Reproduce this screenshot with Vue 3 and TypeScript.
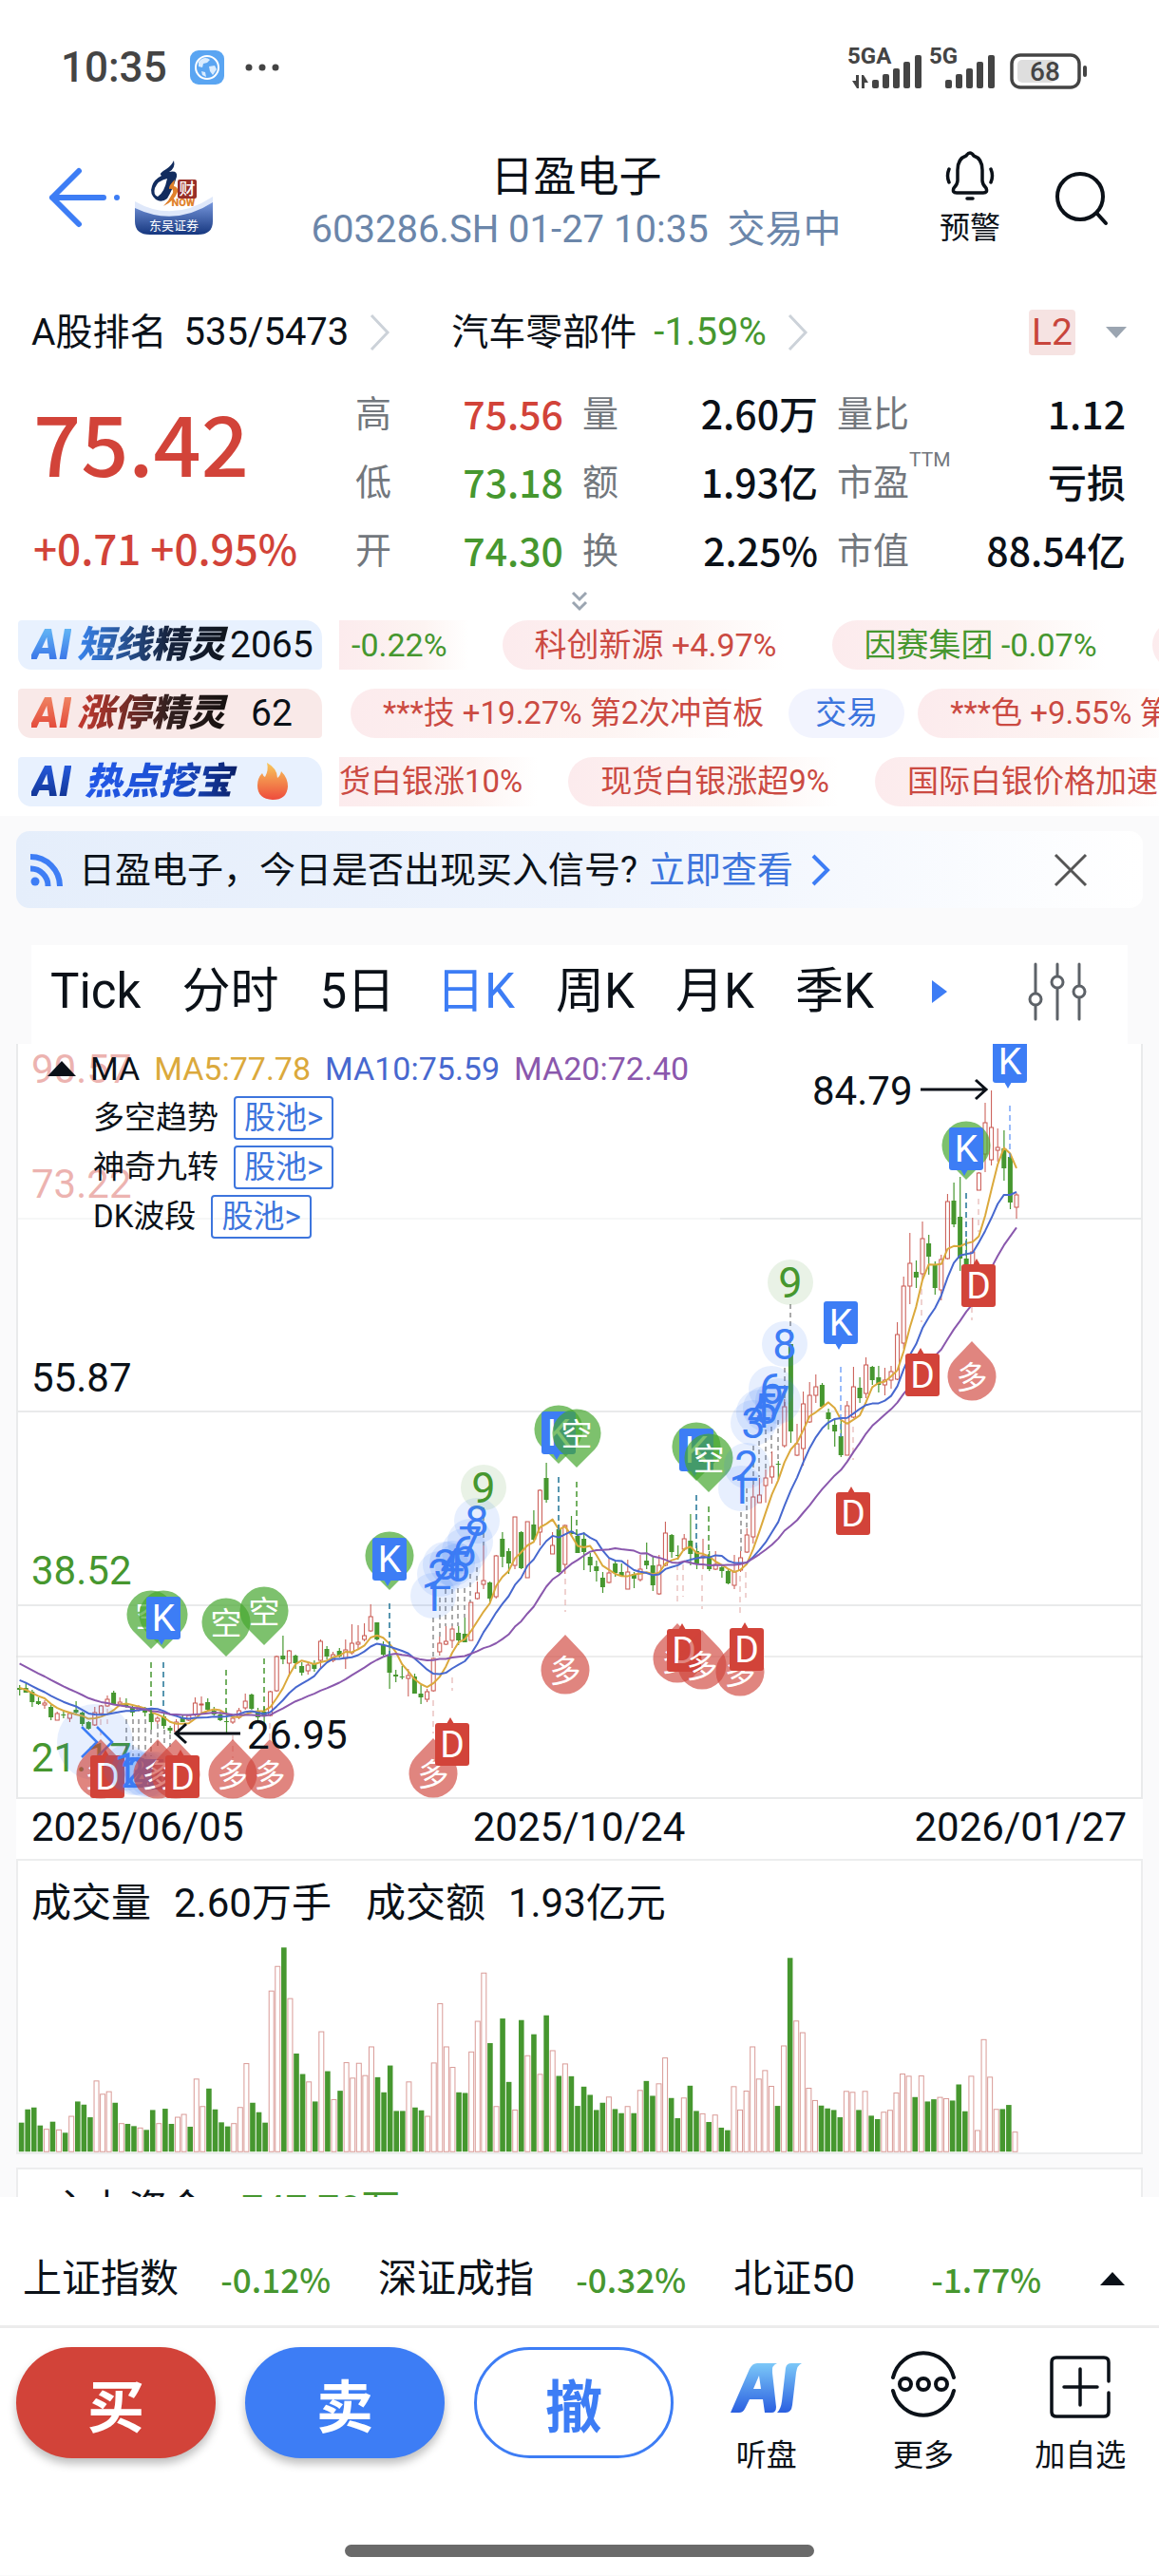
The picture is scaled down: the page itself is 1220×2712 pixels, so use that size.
<script setup lang="ts">
import { ref } from 'vue'

type Tone = 'up' | 'down' | 'flat'
interface Stat { label: string; value: string; tone: Tone; sup?: string }

const stats: Stat[][] = [
  [
    { label: '高', value: '75.56', tone: 'up' },
    { label: '低', value: '73.18', tone: 'down' },
    { label: '开', value: '74.30', tone: 'down' },
  ],
  [
    { label: '量', value: '2.60万', tone: 'flat' },
    { label: '额', value: '1.93亿', tone: 'flat' },
    { label: '换', value: '2.25%', tone: 'flat' },
  ],
  [
    { label: '量比', value: '1.12', tone: 'flat' },
    { label: '市盈', value: '亏损', tone: 'flat', sup: 'TTM' },
    { label: '市值', value: '88.54亿', tone: 'flat' },
  ],
]

const tabs = ['Tick', '分时', '5日', '日K', '周K', '月K', '季K']
const activeTab = ref('日K')

const pools = ['多空趋势', '神奇九转', 'DK波段']

const indices = [
  { name: '上证指数', change: '-0.12%' },
  { name: '深证成指', change: '-0.32%' },
  { name: '北证50', change: '-1.77%' },
]

/* Daily candles on the chart's vertical scale: [falling, high, body top, body bottom, low] */
const candles: number[][] = [
  [1,675,678,680,686],[1,672,678,683,683],[1,680,682,693,698],[1,688,692,695,696],[0,691,694,696,700],
  [1,696,698,709,712],[0,703,705,712,712],[1,701,706,707,710],[0,703,705,710,714],[1,692,701,704,705],
  [1,703,704,716,718],[1,713,714,721,722],[0,698,704,717,718],[0,696,697,705,706],[0,686,690,697,698],
  [1,681,683,695,696],[0,688,693,695,696],[1,689,694,698,699],[1,697,698,704,708],[0,696,698,701,703],
  [1,698,699,704,708],[1,703,705,714,722],[0,708,710,713,716],[1,704,708,718,721],[1,718,720,723,726],
  [0,711,714,724,724],[1,706,709,714,714],[0,706,707,712,713],[0,688,694,706,708],[0,687,695,696,706],
  [1,689,693,701,703],[1,698,702,706,707],[1,703,706,712,713],[1,703,713,714,726],[0,708,710,714,716],
  [0,699,702,709,711],[0,684,692,699,701],[1,684,685,700,701],[1,699,702,709,712],[1,698,703,708,718],
  [0,681,682,707,708],[0,644,645,681,682],[1,623,644,648,653],[0,638,639,652,666],[1,643,644,652,658],
  [1,651,655,662,665],[0,651,654,660,664],[1,649,653,658,661],[0,627,629,649,658],[1,634,637,645,648],
  [0,640,643,649,651],[1,636,639,645,646],[0,627,638,647,658],[0,611,631,641,643],[0,612,630,632,638],
  [0,610,623,627,629],[0,590,603,618,619],[1,609,609,627,628],[1,629,633,643,644],[1,634,644,662,679],
  [1,659,664,666,672],[1,655,666,667,669],[0,658,665,668,687],[1,663,666,684,684],[1,675,684,688,695],
  [0,679,682,690,693],[0,646,647,681,682],[0,624,631,640,644],[0,613,629,632,633],[0,613,616,628,636],
  [1,613,620,628,633],[1,604,621,630,630],[0,588,588,628,628],[0,566,578,584,585],[0,528,565,569,574],
  [1,566,567,584,588],[0,538,539,582,584],[1,514,521,540,551],[1,531,534,547,558],[0,498,498,549,553],
  [1,513,514,552,553],[0,503,503,562,562],[1,491,506,522,523],[0,469,470,514,528],[1,441,457,480,483],
  [0,514,528,537,537],[1,506,511,556,557],[0,506,507,548,558],[1,497,513,516,519],[1,516,518,536,536],
  [1,514,521,535,554],[1,536,540,549,556],[1,544,550,555,566],[1,556,562,572,578],[0,542,557,567,568],
  [1,544,547,557,561],[1,547,556,560,561],[0,543,556,574,574],[1,556,558,563,573],[0,538,553,564,566],
  [1,525,544,549,553],[1,540,549,570,576],[0,538,549,579,580],[0,503,515,549,550],[1,516,517,535,541],
  [1,528,538,539,543],[0,516,521,532,534],[1,495,523,537,549],[1,528,534,548,553],[0,521,539,541,553],
  [1,534,541,553,555],[0,534,548,553,554],[1,548,551,555,562],[1,553,555,568,569],[0,538,556,570,574],
  [0,534,541,554,556],[0,510,517,535,536],[0,464,477,519,526],[0,457,475,483,483],[0,448,457,465,483],
  [0,429,445,456,463],[1,439,442,443,459],[0,374,382,423,425],[1,316,316,408,420],[0,400,421,433,434],
  [0,366,379,426,444],[0,356,370,398,399],[0,348,361,370,378],[1,357,359,382,383],[1,384,388,395,406],
  [1,394,401,408,424],[1,396,413,433,435],[0,376,381,433,433],[0,340,361,393,394],[1,351,362,373,378],
  [0,330,338,368,373],[1,339,340,354,359],[1,339,351,359,367],[0,341,354,359,370],[0,339,345,354,363],
  [0,293,306,353,354],[0,245,255,315,321],[0,199,231,255,274],[1,228,240,246,257],[0,187,205,242,248],
  [1,201,210,224,243],[1,229,233,257,264],[0,222,227,259,270],[0,158,166,226,227],[1,146,165,190,193],
  [1,140,182,226,239],[1,205,226,241,244],[0,183,219,244,248],[0,135,136,154,154],[0,62,83,116,135],
  [0,49,88,122,128],[0,89,109,112,124],[1,91,110,131,144],[1,116,119,167,174],[0,157,159,172,184],
]

/* Closes of the twenty sessions before the first visible candle */
const earlier = [612,616,622,626,630,634,638,640,644,648,652,655,658,661,664,670,673,676,679,682]

const candleX = (i: number): number => 3.6 + 6.6 * i
const closes = earlier.concat(candles.map((c) => (c[0] ? c[3] : c[2])))

function average(days: number): string {
  return candles
    .map((_, i) => {
      const end = i + earlier.length + 1
      const sum = closes.slice(end - days, end).reduce((a, b) => a + b, 0)
      return `${candleX(i).toFixed(1)},${(sum / days).toFixed(1)}`
    })
    .join(' ')
}

const averages = [
  { color: '#dba93c', points: average(5) },
  { color: '#4768cf', points: average(10) },
  { color: '#8a58ad', points: average(20) },
]

/* Traded volume per session, on a scale of three units per pixel */
const volumes = [
  92,134,140,83,71,95,69,60,112,159,149,109,224,182,190,155,89,88,81,75,69,132,89,136,88,109,118,79,230,143,
  200,134,93,80,89,140,279,155,125,92,509,587,647,485,311,246,221,159,380,255,165,193,282,233,280,241,332,236,188,273,
  129,129,221,140,131,112,281,469,332,267,188,186,316,413,566,344,143,422,221,132,417,304,372,245,432,320,240,278,239,145,
  206,180,132,155,173,135,122,143,122,194,224,177,215,297,170,106,170,209,129,120,94,116,76,68,206,132,192,332,230,257,
  207,145,335,614,414,377,201,162,146,137,132,109,191,188,132,191,114,103,125,131,186,246,239,173,240,159,166,172,168,162,
  213,128,239,67,355,236,134,135,148,62,
]
/* Sessions drawn as falling in the volume pane */
const falling = new Set([
  0,1,2,3,5,7,9,10,11,15,17,18,20,21,23,24,27,30,31,32,33,37,38,39,42,44,45,47,49,51,57,58,59,60,61,63,64,70,71,75,77,78,80,82,84,86,88,89,
  90,91,92,93,95,96,98,100,101,104,105,107,108,110,112,113,121,123,128,129,130,131,134,136,137,143,145,146,149,150,151,157,158,
])

const axis = [
  { text: '90.57', y: 41, color: '#d0433a' },
  { text: '73.22', y: 162, color: '#d0433a' },
  { text: '55.87', y: 366, color: '#0b1118' },
  { text: '38.52', y: 569, color: '#46972f' },
  { text: '21.17', y: 766, color: '#46972f' },
]

/* Dashed guides: [x, top, bottom] */
const greyGuides = [
  [116,711,750],[123,711,750],[129,711,750],[136,711,750],[142,722,750],[149,716,740],[156,722,740],[162,727,740],
  [439,604,646],[446,583,624],[452,574,613],[459,574,613],[465,573,613],[472,573,604],[478,558,588],[485,551,566],[492,488,528],
  [763,493,534],[769,468,511],[776,423,466],[782,418,456],[789,406,448],[795,403,431],[802,396,438],[809,341,381],[815,274,316],
]
const greenGuides = [[142,651,705],[155,651,700],[221,659,704],[261,647,702],[393,589,645],[571,456,512],[590,461,518],[716,475,534],[729,487,540],[1000,157,226]]
const blueGuides = [[155,651,700],[393,589,645],[571,456,512],[716,475,534],[868,340,414],[1000,157,226],[1046,65,120]]
const redGuides = [
  [89,711,732],[96,700,716],[228,728,752],[267,715,735],[439,691,726],[459,667,681],[578,563,598],[696,548,588],[702,548,582],
  [722,559,595],[762,560,602],[768,556,583],[881,403,438],[953,258,293],[1006,277,291],[1013,163,198],
]

interface Mark { kind: 'pin' | 'drop' | 'k' | 'd' | 'num'; x: number; y: number; text?: string; last?: boolean }
const num = (x: number, y: number, n: number): Mark => ({ kind: 'num', x, y, text: String(n), last: n === 9 })
const mark = (kind: Mark['kind'], x: number, y: number): Mark => ({ kind, x, y })

const marks: Mark[] = [
  mark('pin', 142, 576), mark('pin', 155, 576), mark('k', 137, 582), mark('pin', 221, 584), mark('pin', 261, 572),
  mark('pin', 393, 514), mark('k', 375, 520),
  mark('pin', 571, 381), mark('k', 553, 387), mark('pin', 590, 385),
  mark('pin', 716, 399), mark('k', 698, 405), mark('pin', 729, 411),
  mark('k', 850, 271), mark('pin', 1000, 82), mark('k', 982, 88), mark('k', 1028, -4),
  mark('drop', 89, 732), mark('d', 78, 749),
  num(116, 762, 1), num(123, 767, 2), num(129, 767, 3), num(136, 769, 4), num(142, 769, 5), num(149, 769, 6),
  mark('drop', 149, 732), mark('drop', 168, 732), mark('d', 157, 749), mark('drop', 228, 732), mark('drop', 267, 732),
  num(439, 581, 1), num(446, 558, 2), num(452, 548, 3), num(459, 547, 4), num(465, 550, 5), num(472, 534, 6), num(478, 524, 7), num(485, 502, 8), num(492, 467, 9),
  num(763, 468, 1), num(769, 444, 2), num(776, 399, 3), num(782, 388, 4), num(789, 384, 5), num(795, 363, 6), num(802, 376, 7), num(809, 316, 8), num(815, 251, 9),
  mark('drop', 439, 731), mark('d', 441, 715), mark('drop', 578, 622),
  mark('drop', 696, 610), mark('d', 685, 616), mark('drop', 722, 617), mark('drop', 762, 624), mark('d', 751, 615),
  mark('d', 863, 472), mark('d', 936, 326), mark('d', 995, 232), mark('drop', 1006, 313),
]
</script>

<template>
  <div class="page">
    <div class="status">
      <span class="clock">10:35</span>
      <svg class="globe" width="36" height="36" viewBox="0 0 36 36">
        <rect width="36" height="36" rx="9" fill="#5aa5f2" />
        <circle cx="18" cy="18" r="12" fill="none" stroke="#fff" stroke-width="2" />
        <path d="M9 12c4-5 9-5 12-2l-3 3-4 1-1 4-4-1zM20 17l6-1 2 4-4 6-3-4zM12 22l4 1 1 5-4-2z" fill="#d9ecff" />
      </svg>
      <svg width="38" height="10" viewBox="0 0 38 10" fill="#444">
        <circle cx="5" cy="5" r="3.500" /><circle cx="19" cy="5" r="3.500" /><circle cx="33" cy="5" r="3.500" />
      </svg>
      <svg class="signals" width="256" height="60" viewBox="0 -8 256 60" fill="#444">
        <text x="0" y="18" class="net">5GA</text>
        <path d="M9 30v6h-4l5 8h2v-14zM15 30h2l5 8h-4v6h-3z" />
        <rect x="26" y="35" width="7" height="9" rx="2" /><rect x="37" y="29" width="7" height="15" rx="2" /><rect x="48" y="23" width="7" height="21" rx="2" /><rect x="59" y="16" width="7" height="28" rx="2" /><rect x="71" y="9" width="7" height="35" rx="2" />
        <text x="86" y="18" class="net">5G</text>
        <rect x="103" y="35" width="7" height="9" rx="2" /><rect x="114" y="29" width="7" height="15" rx="2" /><rect x="125" y="23" width="7" height="21" rx="2" /><rect x="136" y="16" width="7" height="28" rx="2" /><rect x="148" y="9" width="7" height="35" rx="2" />
        <rect x="179" y="14" width="40" height="24" rx="5" fill="#dedede" />
        <rect x="173" y="9" width="71" height="34" rx="9" fill="none" stroke="#444" stroke-width="3.500" />
        <rect x="248" y="20" width="4" height="12" rx="2" />
        <text x="208" y="36" text-anchor="middle" class="charge">68</text>
      </svg>
    </div>

    <header class="header">
      <button class="bare back" aria-label="返回">
        <svg width="76" height="64" viewBox="0 0 76 64" fill="none" stroke="#3d7df5" stroke-width="6" stroke-linecap="round" stroke-linejoin="round">
          <path d="M33 4L5 32l28 28M5 32h54M73 32h0" />
        </svg>
      </button>
      <svg class="logo" width="82" height="80" viewBox="0 0 82 80">
        <defs>
          <linearGradient id="sky" x1="0" y1="0" x2="0" y2="1"><stop offset="0" stop-color="#7b9be0" /><stop offset="1" stop-color="#16377f" /></linearGradient>
        </defs>
        <path d="M0 46Q40 64 82 42V64Q82 78 66 78H16Q0 78 0 64z" fill="url(#sky)" />
        <path d="M0 43Q40 66 82 38V44Q42 70 0 50z" fill="#dfe8fa" />
        <path d="M41 0Q43 8 36 12Q45 10 44 17Q40 30 34 40Q28 45 22 41Q15 35 18 27Q20 20 28 16Q24 14 33 9Q38 6 41 0zM34 19Q24 21 21 29Q19 36 24 38Q31 34 34 19z" fill="#122c5e" fill-rule="evenodd" />
        <path d="M42 20Q35 27 36 30Q41 29 40 34Q36 42 30 48Q41 43 45 33Q46 28 41 27z" fill="#e0812c" />
        <rect x="45" y="20" width="20" height="20" rx="2" fill="#982f28" />
        <text x="55" y="36" class="logo-char">财</text>
        <text x="51" y="48" class="logo-now">NOW</text>
        <text x="41" y="73" class="logo-name">东吴证券</text>
      </svg>
      <div class="title">
        <h1>日盈电子</h1>
        <p>603286.SH 01-27 10:35&nbsp; 交易中</p>
      </div>
      <button class="bare warn">
        <svg width="54" height="54" viewBox="0 0 54 54" fill="none" stroke="#0b1118" stroke-width="3.500" stroke-linecap="round" stroke-linejoin="round">
          <path d="M23 6Q27 0 31 6Q40 9 40 21V32Q40 36 44 40Q46 45 41 45H13Q8 45 10 40Q14 36 14 32V21Q14 9 23 6zM24 51h6M5 20Q2 27 5 34M49 20Q52 27 49 34" />
        </svg>
        <span>预警</span>
      </button>
      <button class="bare search" aria-label="搜索">
        <svg width="60" height="60" viewBox="0 0 60 60" fill="none" stroke="#0b1118" stroke-width="4" stroke-linecap="round">
          <circle cx="28" cy="28" r="24" /><path d="M46 46l9 10" />
        </svg>
      </button>
    </header>

    <div class="rank">
      <a href="#" class="rank-link"><span>A股排名</span><span class="figure">535/5473</span>
        <svg width="22" height="40" viewBox="0 0 22 40" fill="none" stroke="#ccd2d9" stroke-width="3"><path d="M2 2l17 18L2 38" /></svg>
      </a>
      <a href="#" class="rank-link sector"><span>汽车零部件</span><span class="figure down">-1.59%</span>
        <svg width="22" height="40" viewBox="0 0 22 40" fill="none" stroke="#ccd2d9" stroke-width="3"><path d="M2 2l17 18L2 38" /></svg>
      </a>
      <button class="bare level"><span>L2</span>
        <svg width="22" height="12" viewBox="0 0 22 12" fill="#9ba5b1"><path d="M0 0h22L11 12z" /></svg>
      </button>
    </div>

    <section class="quote">
      <div class="price up">
        <strong>75.42</strong>
        <span>+0.71 +0.95%</span>
      </div>
      <dl v-for="(group, g) in stats" :key="g" class="group">
        <div v-for="s in group" :key="s.label" class="stat">
          <dt>{{ s.label }}<sup v-if="s.sup">{{ s.sup }}</sup></dt>
          <dd :class="s.tone">{{ s.value }}</dd>
        </div>
      </dl>
    </section>

    <button class="bare expand" aria-label="展开">
      <svg width="18" height="22" viewBox="0 0 18 22" fill="none" stroke="#9ba5b1" stroke-width="3"><path d="M2 2l7 7 7-7M2 12l7 7 7-7" /></svg>
    </button>

    <section class="feeds">
      <div class="feed">
        <a href="#" class="tag blue"><em class="ai sky">AI</em><em class="name ink-blue">短线精灵</em><span class="count">2065</span></a>
        <div class="stream quotes">
          <span class="pill cut green">-0.22%</span>
          <span class="pill">科创新源 +4.97%</span>
          <span class="pill green">因赛集团 -0.07%</span>
          <span class="pill"></span>
        </div>
      </div>
      <div class="feed">
        <a href="#" class="tag rose"><em class="ai fire">AI</em><em class="name ink-red">涨停精灵</em><span class="count wide">62</span></a>
        <div class="stream inset">
          <span class="pill tight">***技 +19.27% 第2次冲首板</span>
          <a href="#" class="trade">交易</a>
          <span class="pill">***色 +9.55% 第</span>
        </div>
      </div>
      <div class="feed">
        <a href="#" class="tag blue"><em class="ai royal">AI</em><em class="name ink-royal">热点挖宝</em>
          <svg class="flame" width="34" height="40" viewBox="0 0 34 40">
            <defs><linearGradient id="flame" x1="0" y1="0" x2="0" y2="1"><stop offset="0" stop-color="#f8c95c" /><stop offset="1" stop-color="#ee4b3c" /></linearGradient></defs>
            <path d="M11 0Q22 6 22 16Q25 14 26 9Q33 16 33 25Q32 39 17 39Q1 38 1 24Q1 16 6 11Q7 14 9 15Q13 8 11 0z" fill="url(#flame)" />
          </svg>
        </a>
        <div class="stream">
          <span class="pill cut flush">货白银涨10%</span>
          <span class="pill">现货白银涨超9%</span>
          <span class="pill">国际白银价格加速</span>
        </div>
      </div>
    </section>

    <div class="banner">
      <svg width="34" height="34" viewBox="0 0 34 34" fill="none" stroke="#3d7df5" stroke-width="6">
        <circle cx="5" cy="29" r="4.500" fill="#3d7df5" stroke="none" /><path d="M0 15.500A18 18 0 0 1 18.500 34M0 3A31 31 0 0 1 31 34" />
      </svg>
      <span class="ask">日盈电子，今日是否出现买入信号?</span>
      <a href="#">立即查看
        <svg width="22" height="36" viewBox="0 0 22 36" fill="none" stroke="#3d7df5" stroke-width="4"><path d="M3 3l15 15L3 33" /></svg>
      </a>
      <button class="bare close" aria-label="关闭">
        <svg width="36" height="36" viewBox="0 0 36 36" fill="none" stroke="#555" stroke-width="3"><path d="M2 2l32 32M34 2L2 34" /></svg>
      </button>
    </div>

    <nav class="tabs">
      <button v-for="t in tabs" :key="t" class="bare tab" :class="{ active: t === activeTab }" @click="activeTab = t">{{ t }}</button>
      <svg class="more-tabs" width="16" height="24" viewBox="0 0 16 24" fill="#3d7df5"><path d="M0 0l16 12L0 24z" /></svg>
      <button class="bare tune" aria-label="设置">
        <svg width="64" height="62" viewBox="0 0 64 62" fill="none" stroke="#5d6268" stroke-width="3" stroke-linecap="round">
          <path d="M9 2v30M9 46v14M32 2v12M32 28v32M55 2v22M55 38v22" />
          <circle cx="9" cy="39" r="6" /><circle cx="32" cy="21" r="6" /><circle cx="55" cy="31" r="6" />
        </svg>
      </button>
    </nav>

    <section class="panel chart">
      <svg class="plot" viewBox="0 0 1186 795">
        <defs>
          <symbol id="pin" viewBox="0 0 52 64" width="52" height="64"><path d="M26 62L7 43A25.500 25.500 0 1 1 45 43z" /></symbol>
          <symbol id="drop" viewBox="0 0 52 64" width="52" height="64"><path d="M26 0L7 20A25.500 25.500 0 1 0 45 20z" /></symbol>
        </defs>
        <g stroke="#e9eaeb" stroke-width="2">
          <path d="M0 184H1186M0 387H1186M0 591H1186M0 794H1186M1 0V794M1185 0V794" />
          <path d="M0 645H1186" stroke="#dcdcdc" stroke-width="1" />
        </g>
        <text v-for="a in axis" :key="a.text" x="16" :y="a.y" :fill="a.color" class="axis">{{ a.text }}</text>

        <g fill="none" stroke-width="1">
          <g stroke="#555" stroke-dasharray="5 4"><path v-for="(l, i) in greyGuides" :key="i" :d="`M${l[0]} ${l[1]}V${l[2]}`" /></g>
          <g stroke="#e0a5a2" stroke-dasharray="6 5"><path v-for="(l, i) in redGuides" :key="i" :d="`M${l[0]} ${l[1]}V${l[2]}`" /></g>
        </g>
        <g>
          <template v-for="(c, i) in candles" :key="i">
            <g v-if="c[0]" fill="#46972f">
              <rect :x="candleX(i) - 0.5" :y="c[1]" width="1.200" :height="c[4] - c[1]" />
              <rect :x="candleX(i) - 2.5" :y="c[2]" width="5" :height="Math.max(c[3] - c[2], 1)" />
            </g>
            <g v-else fill="none" stroke="#c8544d" stroke-width="1">
              <path :d="`M${candleX(i)} ${c[1]}V${c[2]}M${candleX(i)} ${c[3]}V${c[4]}`" />
              <rect :x="candleX(i) - 2" :y="c[2]" width="4" :height="Math.max(c[3] - c[2], 1)" />
            </g>
          </template>
        </g>
        <polyline v-for="l in averages" :key="l.color" :points="l.points" fill="none" :stroke="l.color" stroke-width="2" stroke-linejoin="round" />
        <g fill="none" stroke-width="1.500" stroke-dasharray="6 4">
          <g stroke="#46972f"><path v-for="(l, i) in greenGuides" :key="i" :d="`M${l[0]} ${l[1]}V${l[2]}`" /></g>
          <g stroke="#3d7df5" stroke-opacity="0.700"><path v-for="(l, i) in blueGuides" :key="i" :d="`M${l[0]} ${l[1]}V${l[2]}`" /></g>
        </g>

        <circle cx="83" cy="735" r="40" fill="#3d7df5" fill-opacity="0.120" />
        <path d="M69 719l16 16-16 16M85 719l16 16-16 16" fill="none" stroke="#3d7df5" stroke-width="2.500" />

        <g v-for="(m, i) in marks" :key="i">
          <template v-if="m.kind === 'pin'">
            <use href="#pin" :x="m.x - 26" :y="m.y - 1" fill="#46a62f" fill-opacity="0.700" />
            <text :x="m.x" :y="m.y + 38" class="glyph">空</text>
          </template>
          <template v-else-if="m.kind === 'drop'">
            <use href="#drop" :x="m.x - 26" :y="m.y" fill="#d0433a" fill-opacity="0.650" />
            <text :x="m.x" :y="m.y + 50" class="glyph">多</text>
          </template>
          <template v-else-if="m.kind === 'k'">
            <path :d="`M${m.x + 12} ${m.y + 44}h8l-4 7z`" fill="#3d7df5" />
            <rect :x="m.x" :y="m.y" width="36" height="45" rx="3" fill="#3d7df5" />
            <text :x="m.x + 18" :y="m.y + 36" class="letter">K</text>
          </template>
          <template v-else-if="m.kind === 'd'">
            <path :d="`M${m.x + 12} ${m.y + 1}h8l-4-7z`" fill="#d24339" />
            <rect :x="m.x" :y="m.y" width="36" height="45" rx="3" fill="#d24339" />
            <text :x="m.x + 18" :y="m.y + 36" class="letter">D</text>
          </template>
          <template v-else>
            <circle :cx="m.x" :cy="m.y" r="24" :fill="m.last ? '#46972f' : '#3d7df5'" fill-opacity="0.120" />
            <text :x="m.x" :y="m.y + 16" class="digit" :fill="m.last ? '#46972f' : '#3d7df5'">{{ m.text }}</text>
          </template>
        </g>

        <g fill="none" stroke="#0b1118" stroke-width="3">
          <path d="M952 48H1021M1010 38l11 10-11 10M236 726H168M179 716l-11 10 11 10" />
        </g>
        <text x="838" y="64" class="callout">84.79</text>
        <text x="243" y="742" class="callout">26.95</text>
      </svg>

      <div class="legend">
        <p class="ma">
          <svg width="30" height="16" viewBox="0 0 30 16" fill="#0b1118"><path d="M0 16L15 0l15 16z" /></svg>
          <span>MA</span><span class="ma5">MA5:77.78</span><span class="ma10">MA10:75.59</span><span class="ma20">MA20:72.40</span>
        </p>
        <p v-for="p in pools" :key="p" class="pool"><span>{{ p }}</span><button class="bare">股池&gt;</button></p>
      </div>
    </section>

    <div class="dates"><span>2025/06/05</span><span>2025/10/24</span><span>2026/01/27</span></div>

    <section class="panel volume">
      <p class="vol-title"><span>成交量</span><span>2.60万手</span><span class="amount">成交额</span><span>1.93亿元</span></p>
      <svg class="plot" viewBox="0 0 1186 222">
        <template v-for="(v, i) in volumes" :key="i">
          <rect v-if="falling.has(i)" :x="candleX(i) - 2.800" :y="221 - v / 3" width="5.600" :height="v / 3" fill="#46972f" />
          <rect v-else :x="candleX(i) - 2.500" :y="221 - v / 3" width="5" :height="v / 3" fill="#fff" stroke="#d99a96" stroke-width="1" />
        </template>
      </svg>
    </section>

    <section class="panel flow">
      <p><span>主力资金</span><span class="down">-747.70万</span></p>
    </section>

    <footer class="footer">
      <div class="ticker">
        <a v-for="x in indices" :key="x.name" href="#"><span>{{ x.name }}</span><b class="down">{{ x.change }}</b></a>
        <svg width="26" height="14" viewBox="0 0 26 14" fill="#0b1118"><path d="M0 14L13 0l13 14z" /></svg>
      </div>
      <div class="actions">
        <button class="order buy">买</button>
        <button class="order sell">卖</button>
        <button class="order cancel">撤</button>
        <button class="bare tool">
          <svg width="76" height="72" viewBox="0 0 76 72">
            <defs><linearGradient id="ai" x1="0" y1="0" x2="0" y2="1"><stop offset="0" stop-color="#7cc8f8" /><stop offset="1" stop-color="#2a5fe0" /></linearGradient></defs>
            <path d="M0 66L20 20Q23 14 28 14H49Q43 16 44 24L48 60Q48 66 43 66H36L34 52H20L15 62Q13 66 9 66zM24 41H32L30 27zM49 66Q53 62 54 54L58 19Q59 14 64 14H75Q70 16 69 24L65 58Q64 66 58 66z" fill="url(#ai)" fill-rule="evenodd" />
          </svg>
          <span>听盘</span>
        </button>
        <button class="bare tool">
          <svg width="76" height="78" viewBox="0 0 76 78" fill="none" stroke="#0b1118" stroke-width="4" stroke-linecap="round">
            <path d="M6 32A33 34 0 0 1 70 32M6 46A33 34 0 0 0 70 46" />
            <circle cx="19" cy="39" r="6" /><circle cx="38" cy="39" r="6" /><circle cx="57" cy="39" r="6" />
          </svg>
          <span>更多</span>
        </button>
        <button class="bare tool">
          <svg width="76" height="78" viewBox="0 0 76 78" fill="none" stroke="#0b1118" stroke-width="3.500" stroke-linecap="round">
            <path d="M68 36V16Q68 11 63 11H13Q8 11 8 16V68Q8 73 13 73H63Q68 73 68 68V48M38 23v38M21 42h35" />
          </svg>
          <span>加自选</span>
        </button>
      </div>
      <div class="home"></div>
    </footer>
  </div>
</template>

<style>
body { margin: 0; background: #fafafb; }
</style>

<style scoped>
.page {
  display: flex;
  flex-direction: column;
  background: #fafafb;
  color: #0b1118;
  font-family: Roboto, "Noto Sans CJK SC", sans-serif;
  font-size: 38px;
  line-height: 48px;
  white-space: nowrap;
  overflow: hidden;
}
h1, p, dl, dd { margin: 0; font-weight: 400; }
svg { display: block; flex: none; }
a { color: inherit; text-decoration: none; }
.bare { padding: 0; border: 0; background: none; font: inherit; color: inherit; cursor: pointer; }
.up { color: #d24339; }
.down { color: #46972f; }
.flat { color: #0b1118; }

.status { display: flex; align-items: center; height: 142px; padding: 0 72px 0 64px; background: #fff; color: #444; }
.clock { font-size: 44px; font-weight: 500; }
.globe { margin: 0 21px 0 24px; }
.signals { margin-left: auto; }
.net { font-size: 24px; font-weight: 700; }
.charge { font-size: 28px; font-weight: 500; }

.header { display: flex; align-items: center; padding: 0 51px 0 50px; height: 154px; background: #fff; }
.back { width: 76px; padding-bottom: 22px; }
.logo { margin: 0 0 20px 16px; }
.logo-char { font-size: 17px; font-weight: 500; fill: #fff; text-anchor: middle; }
.logo-now { font-size: 11px; font-weight: 900; fill: #e0812c; text-anchor: middle; }
.logo-name { font-size: 13px; fill: #fff; text-anchor: middle; }
.title { flex: 1; text-align: center; padding-bottom: 14px; }
.title h1 { font-size: 45px; line-height: 60px; }
.title p { color: #6b86aa; font-size: 40px; line-height: 50px; }
.warn { display: flex; flex-direction: column; align-items: center; gap: 8px; font-size: 32px; line-height: 40px; padding-bottom: 20px; }
.search { margin: 0 0 20px 56px; }

.rank { display: flex; align-items: center; height: 104px; padding: 4px 34px 0 33px; box-sizing: border-box; background: #fff; font-size: 39px; }
.rank-link { display: flex; align-items: center; gap: 18px; }
.figure { font-size: 40px; }
.sector { margin-left: 64px; }
.rank-link svg { margin-left: 4px; }
.level { display: flex; align-items: center; gap: 32px; margin-left: auto; color: #c8453c; }
.level span { padding: 0 3px; border-radius: 4px; background: #f6e3e2; }

.quote { display: grid; grid-template-columns: 319fr 219fr 248fr 304fr; column-gap: 20px; padding: 0 35px; background: #fff; }
.price { display: flex; flex-direction: column; font-family: "Noto Sans CJK SC", sans-serif; font-weight: 500; font-size: 44px; line-height: 68px; }
.price strong { font-size: 88px; font-weight: 500; line-height: 128px; margin-bottom: 14px; }
.stat { display: flex; justify-content: space-between; align-items: center; height: 72px; }
.stat dt { position: relative; color: #72777d; }
.stat sup { position: absolute; left: 100%; top: -14px; font-size: 21px; line-height: 28px; }
.stat dd { font-family: "Noto Sans CJK SC", sans-serif; font-size: 41px; font-weight: 500; line-height: 68px; height: 72px; }

.expand { display: flex; justify-content: center; align-items: center; height: 37px; padding-bottom: 4px; box-sizing: border-box; background: #fff; }

.feeds { display: flex; flex-direction: column; gap: 20px; padding-bottom: 10px; background: #fff; }
.feed { display: flex; gap: 18px; height: 52px; line-height: 52px; padding-left: 19px; }
.tag { display: flex; flex: none; align-items: center; width: 306px; padding-left: 14px; border-radius: 4px 18px 4px 14px; }
.blue { background: #e8f1fe; }
.rose { background: #f9e9e8; }
.ai { font-size: 44px; font-weight: 900; margin-right: 6px; }
.name { font-size: 39px; font-weight: 900; padding-right: 5px; }
.ai, .name { background-clip: text; color: transparent; }
.sky { background-image: linear-gradient(#6cc6f8, #2f62e4); }
.fire { background-image: linear-gradient(#f2926c, #e0392f); }
.royal { margin-right: 14px; background-image: linear-gradient(#2a63ee, #0c2a80); }
.ink-blue { background-image: linear-gradient(90deg, #3a86f0, #16233e 60%, #10151c); }
.ink-red { background-image: linear-gradient(90deg, #c63a30, #32201f 60%, #14100f); }
.ink-royal { background-image: linear-gradient(90deg, #2358e8, #1c4fd0 60%, #0a1f66); }
.count { font-size: 39px; }
.count.wide { margin-left: 22px; }
.flame { margin-left: 20px; }
.stream { display: flex; flex: 1; min-width: 0; gap: 14px; overflow: hidden; font-size: 33px; color: #cb4a42; }
.quotes { gap: 24px; font-size: 34px; }
.inset { padding-left: 12px; }
.pill { flex: none; padding: 0 34px; border-radius: 26px 0 0 26px; background: linear-gradient(90deg, #fcebed, #fdf4f2 60%, #fff 92%); }
.pill.green { color: #46972f; }
.pill.cut { padding-left: 13px; border-radius: 0; }
.pill.flush { padding-left: 0; }
.pill.tight { padding-right: 12px; }
.trade { flex: none; padding: 0 28px; border-radius: 26px; background: #f2f4fe; color: #3d75dd; }

.banner { display: flex; align-items: center; height: 81px; margin: 16px 17px 39px; padding: 0 58px 0 15px; border-radius: 14px; background: linear-gradient(90deg, #e5eefb, #edf3fd 50%, #fff); }
.ask { margin: 0 12px 0 17px; }
.banner a { display: flex; align-items: center; gap: 18px; color: #3d75dd; }
.close { margin-left: auto; }

.tabs { display: flex; align-items: center; height: 104px; margin: 0 33px; padding: 0 42px 6px 20px; box-sizing: border-box; background: #fff; font-size: 51px; }
.tab { margin-right: 43px; }
.tab.active { color: #3d7df5; }
.more-tabs { margin-left: 18px; }
.tune { margin-left: auto; }

.panel { position: relative; margin: 0 17px; background: #fff; }
.plot { width: 100%; height: auto; overflow: hidden; }
.axis { font-size: 42px; }
.callout { font-size: 42px; fill: #0b1118; }
.glyph { font-size: 33px; fill: #fff; text-anchor: middle; }
.letter { font-size: 39px; fill: #fff; text-anchor: middle; }
.digit { font-size: 45px; text-anchor: middle; }

.legend { position: absolute; left: 2px; top: 0; padding: 0 33px 0 79px; background: rgba(255, 255, 255, 0.6); font-size: 33px; }
.legend p { display: flex; align-items: center; height: 52px; }
.legend .ma { margin-left: -48px; gap: 15px; font-size: 34px; }
.ma5 { color: #dba93c; }
.ma10 { color: #4768cf; }
.ma20 { color: #8a58ad; }
.pool { gap: 16px; }
.pool button { height: 46px; padding: 0 9px; border: 2px solid #3d75dd; border-radius: 4px; color: #3d75dd; line-height: 42px; }

.dates { display: flex; justify-content: space-between; margin: 0 17px; padding: 0 17px 4px 16px; background: #fff; font-size: 42px; line-height: 59px; }

.volume { border: 2px solid #ecedee; margin-bottom: 14px; }
.vol-title { display: flex; gap: 24px; padding: 4px 14px 0; font-size: 42px; line-height: 82px; }
.amount { margin-left: 12px; }

.flow { height: 31px; box-sizing: border-box; overflow: hidden; border: 2px solid #ecedee; border-bottom: 0; font-size: 41px; line-height: 84px; }
.flow p { display: flex; gap: 26px; padding-left: 34px; }

.footer { background: #fff; }
.ticker { display: flex; align-items: center; gap: 50px; height: 138px; padding: 36px 36px 0 24px; box-sizing: border-box; border-bottom: 3px solid #ececec; font-size: 41px; }
.ticker a { display: flex; justify-content: space-between; flex: 1; }
.ticker b { font-family: "Noto Sans CJK SC", sans-serif; font-size: 35px; font-weight: 500; }
.ticker svg { margin-left: 12px; }
.actions { display: flex; align-items: flex-start; padding: 20px 0 0 17px; }
.order { width: 210px; height: 117px; margin-right: 31px; padding: 0; border: 0; border-radius: 59px; color: #fff; font: 700 60px/110px "Noto Sans CJK SC", sans-serif; }
.buy { background: #d24339; box-shadow: 0 6px 10px rgba(0, 0, 0, 0.25); }
.sell { background: #3d7df5; box-shadow: 0 6px 10px rgba(0, 0, 0, 0.25); }
.order.cancel { margin-right: 15px; border: 3px solid #3d7df5; background: #fff; color: #3d7df5; }
.tool { flex: 1 1 0; display: flex; flex-direction: column; align-items: center; font-size: 32px; line-height: 44px; }
.tool svg { height: 78px; margin-bottom: 14px; }
.home { width: 494px; height: 13px; margin: 72px auto 19px; border-radius: 7px; background: #6a6a6a; }
</style>
